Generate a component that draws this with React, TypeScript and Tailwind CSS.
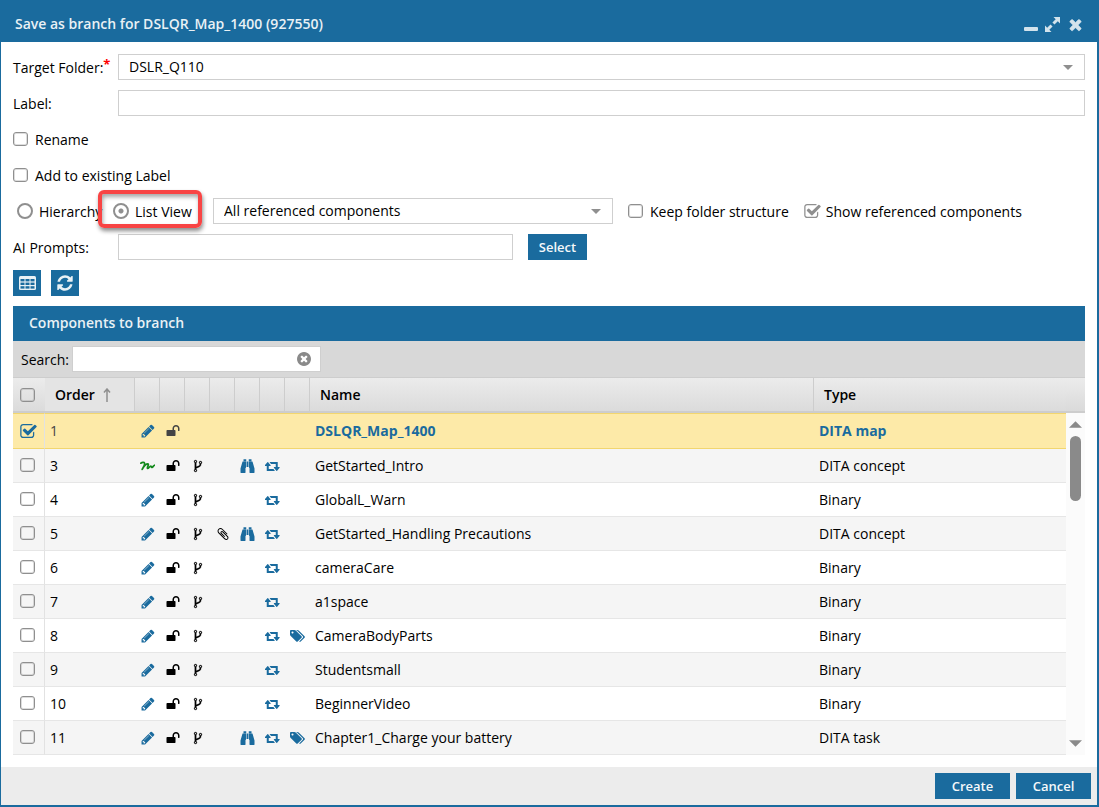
import React, { useState } from 'react';

const BLUE = '#1a6b9e';

const icons = {
  pencil: {
    box: '64 64 1664 1664',
    d: 'M491 1536l91-91-235-235-91 91v107h128v128h107zm523-928q0-22-22-22-10 0-17 7l-542 542q-7 7-7 17 0 22 22 22 10 0 17-7l542-542q7-7 7-17zm-54-192l416 416-832 832h-416v-416zm683 96q0 53-37 90l-166 166-416-416 166-165q36-38 90-38 53 0 91 38l235 234q37 39 37 91z',
  },
  unlock: {
    box: '0 0 1792 1792',
    d: 'M1728 576v256q0 26-19 45t-45 19h-64q-26 0-45-19t-19-45v-256q0-106-75-181t-181-75-181 75-75 181v192h96q40 0 68 28t28 68v576q0 40-28 68t-68 28h-960q-40 0-68-28t-28-68v-576q0-40 28-68t68-28h672v-192q0-185 131.5-316.5t316.5-131.5 316.5 131.5 131.5 316.5z',
  },
  fork: {
    box: '0 0 1792 1792',
    d: 'M672 1472q0-40-28-68t-68-28-68 28-28 68 28 68 68 28 68-28 28-68zm0-1152q0-40-28-68t-68-28-68 28-28 68 28 68 68 28 68-28 28-68zm640 128q0-40-28-68t-68-28-68 28-28 68 28 68 68 28 68-28 28-68zm96 0q0 52-26 96.5t-70 69.5q-2 287-226 414-67 38-203 81-128 40-169.5 71t-41.5 100v26q44 25 70 69.5t26 96.5q0 80-56 136t-136 56-136-56-56-136q0-52 26-96.5t70-69.5v-820q-44-25-70-69.5t-26-96.5q0-80 56-136t136-56 136 56 56 136q0 52-26 96.5t-70 69.5v497q54-26 154-57 55-17 87.5-29.5t70.5-31 59-39.5 40.5-51 28-69.5 8.5-91.5q-44-25-70-69.5t-26-96.5q0-80 56-136t136-56 136 56 56 136z',
  },
  clip: {
    box: '0 0 1792 1792',
    d: 'M1596 1385q0 117-79 196t-196 79q-135 0-235-100l-777-776q-113-115-113-271 0-159 110-270t269-111q158 0 273 113l605 606q10 10 10 22 0 16-30.5 46.5t-46.5 30.5q-13 0-23-10l-606-607q-79-77-181-77-106 0-179 75t-73 181q0 105 76 181l776 777q63 63 145 63 64 0 106-42t42-106q0-82-63-145l-581-581q-26-24-60-24-29 0-48 19t-19 48q0 32 25 59l410 410q10 10 10 22 0 16-31 47t-47 31q-12 0-22-10l-410-410q-63-61-63-149 0-82 57-139t139-57q88 0 149 63l581 581q100 98 100 235z',
  },
  binoculars: {
    box: '-64 0 1920 1792',
    d: 'M704 320v768q0 26-19 45t-45 19v576q0 26-19 45t-45 19h-512q-26 0-45-19t-19-45v-512l249-873q7-23 31-23h424zm320 0v704h-256v-704h256zm768 896v512q0 26-19 45t-45 19h-512q-26 0-45-19t-19-45v-576q-26 0-45-19t-19-45v-768h424q24 0 31 23zm-1056-1152v224h-352v-224q0-14 9-23t23-9h288q14 0 23 9t9 23zm672 0v224h-352v-224q0-14 9-23t23-9h288q14 0 23 9t9 23z',
  },
  retweet: {
    box: '-32 0 1920 1792',
    d: 'M1216 1504q0 13-9.5 22.5t-22.5 9.5h-960q-8 0-13.5-2t-9-7-5.5-8-3-11.5-1-11.5v-600h-192q-26 0-45-19t-19-45q0-24 15-41l320-384q19-22 49-22t49 22l320 384q15 17 15 41 0 26-19 45t-45 19h-192v384h576q16 0 25 11l160 192q7 10 7 21zm640-416q0 24-15 41l-320 384q-20 23-49 23t-49-23l-320-384q-15-17-15-41 0-26 19-45t45-19h192v-384h-576q-16 0-25-12l-160-192q-7-9-7-20 0-13 9.5-22.5t22.5-9.5h960q8 0 13.5 2t9 7 5.5 8 3 11.5 1 11.5v600h192q26 0 45 19t19 45z',
  },
  tags: {
    box: '0 0 1920 1792',
    d: 'M448 448q0-53-37.5-90.5t-90.5-37.5-90.5 37.5-37.5 90.5 37.5 90.5 90.5 37.5 90.5-37.5 37.5-90.5zm1067 576q0 53-37 90l-491 492q-39 37-91 37-53 0-90-37l-715-716q-38-37-64.5-101t-26.5-117v-416q0-52 38-90t90-38h416q53 0 117 26.5t102 64.5l715 714q37 39 37 91zm384 0q0 53-37 90l-491 492q-39 37-91 37-36 0-59-14t-53-45l470-470q37-37 37-90 0-52-37-91l-715-714q-38-38-102-64.5t-117-26.5h224q53 0 117 26.5t102 64.5l715 714q37 39 37 91z',
  },
  refresh: {
    box: '0 0 1792 1792',
    d: 'M1639 1056q0 5-1 7-64 268-268 434.5t-478 166.5q-146 0-282.5-55t-243.5-157l-129 129q-19 19-45 19t-45-19-19-45v-448q0-26 19-45t45-19h448q26 0 45 19t19 45-19 45l-137 137q71 66 161 102t187 36q134 0 250-65t186-179q11-17 53-117 8-23 30-23h192q13 0 22.5 9.5t9.5 22.5zm25-800v448q0 26-19 45t-45 19h-448q-26 0-45-19t-19-45 19-45l138-138q-148-137-349-137-134 0-250 65t-186 179q-11 17-53 117-8 23-30 23h-199q-13 0-22.5-9.5t-9.5-22.5v-7q65-268 270-434.5t480-166.5q146 0 284 55.5t245 156.5l130-129q19-19 45-19t45 19 19 45z',
  },
  times: {
    box: '0 0 1792 1792',
    d: 'M1490 1322q0 40-28 68l-136 136q-28 28-68 28t-68-28l-294-294-294 294q-28 28-68 28t-68-28l-136-136q-28-28-28-68t28-68l294-294-294-294q-28-28-28-68t28-68l136-136q28-28 68-28t68 28l294 294 294-294q28-28 68-28t68 28l136 136q28 28 28 68t-28 68l-294 294 294 294q28 28 28 68z',
  },
  timesCircle: {
    box: '128 128 1536 1536',
    d: 'M1277 1122q0-26-19-45l-181-181 181-181q19-19 19-45 0-27-19-46l-90-90q-19-19-46-19-26 0-45 19l-181 181-181-181q-19-19-45-19-27 0-46 19l-90 90q-19 19-19 46 0 26 19 45l181 181-181 181q-19 19-19 45 0 27 19 46l90 90q19 19 46 19 26 0 45-19l181-181 181 181q19 19 45 19 27 0 46-19l90-90q19-19 19-46zm387-226q0 209-103 385.5t-279.5 279.5-385.5 103-385.5-103-279.5-279.5-103-385.5 103-385.5 279.5-279.5 385.5-103 385.5 103 279.5 279.5 103 385.5z',
  },
  checkSquare: {
    box: '64 128 1664 1408',
    d: 'M1472 930v318q0 119-84.5 203.5t-203.5 84.5h-832q-119 0-203.5-84.5t-84.5-203.5v-832q0-119 84.5-203.5t203.5-84.5h832q63 0 117 25 15 7 18 23 3 17-9 29l-49 49q-10 10-23 10-3 0-9-2-23-6-45-6h-832q-66 0-113 47t-47 113v832q0 66 47 113t113 47h832q66 0 113-47t47-113v-254q0-13 9-22l64-64q10-10 23-10 6 0 12 3 20 8 20 29zm231-489l-814 814q-24 24-57 24t-57-24l-430-430q-24-24-24-57t24-57l110-110q24-24 57-24t57 24l263 263 647-647q24-24 57-24t57 24l110 110q24 24 24 57t-24 57z',
  },
};

type IconName = keyof typeof icons;

function Icon({ name, className = '' }: { name: IconName; className?: string }) {
  return (
    <svg viewBox={icons[name].box} fill="currentColor" aria-hidden="true" className={`shrink-0 ${className}`}>
      <path d={icons[name].d} />
    </svg>
  );
}

function Scribble() {
  return (
    <svg viewBox="0 0 15 14" fill="none" stroke="#138a1c" aria-hidden="true" className="h-[14px] w-[15px]">
      <path d="M.8 4.200C2 3.400 4.200 3 4.600 4.200 5 5.800 3.200 8.400 2.200 10.400 3.600 8 6.400 4.600 8.200 5 9.200 5.600 6.400 8.800 7.600 9.400 8.800 9.600 9.600 7 10.800 7 11.600 7.200 11 8.600 12 8.400 13 8.200 13.400 6.600 14.600 6.200" strokeWidth="1.7" strokeLinecap="round" strokeLinejoin="round" />
    </svg>
  );
}

function Arrow({ className = '' }: { className?: string }) {
  return (
    <svg viewBox="0 0 10 5" fill="currentColor" aria-hidden="true" className={className}>
      <path d="M0 0h10L5 5z" />
    </svg>
  );
}

type CheckProps = {
  id?: string;
  label?: string;
  checked: boolean;
  onChange: () => void;
  tone?: string;
};

function Check({ id, label, checked, onChange, tone = 'text-[#8f8f8f]' }: CheckProps) {
  return (
    <span className={`inline-grid h-[14px] w-[17px] items-center ${tone}`}>
      <input
        id={id}
        aria-label={label}
        type="checkbox"
        checked={checked}
        onChange={onChange}
        className="col-start-1 row-start-1 h-[14px] w-[15px] appearance-none rounded-[3px] border border-[#8f8f8f] bg-transparent shadow-[inset_0_0_0_1px_rgba(143,143,143,0.3)] checked:border-transparent checked:shadow-none"
      />
      {checked && <Icon name="checkSquare" className="pointer-events-none col-start-1 row-start-1 h-[14px] w-[17px]" />}
    </span>
  );
}

function SelectBox({ id, label, options, className = '' }: { id: string; label?: string; options: string[]; className?: string }) {
  return (
    <div className={`relative ${className}`}>
      <select id={id} aria-label={label} className="block h-[26px] w-full appearance-none border border-[#cfcfcf] bg-white pr-8 pb-px pl-[10px] text-black">
        {options.map((o) => (
          <option key={o}>{o}</option>
        ))}
      </select>
      <Arrow className="pointer-events-none absolute top-[11px] right-3 h-[5px] w-[10px] text-[#8f8f8f]" />
    </div>
  );
}

const inputClass = 'h-[26px] border border-[#cfcfcf] bg-white px-[10px]';
const blueButton = 'h-[26px] bg-[#1a6b9e] text-[13px] leading-[18px] font-semibold text-[#f4f8fa]';

type Row = {
  order: number;
  name: string;
  type: string;
  edited?: boolean;
  clip?: boolean;
  seen?: boolean;
  tags?: boolean;
};

const rows: Row[] = [
  { order: 1, name: 'DSLQR_Map_1400', type: 'DITA map' },
  { order: 3, name: 'GetStarted_Intro', type: 'DITA concept', edited: true, seen: true },
  { order: 4, name: 'GlobalL_Warn', type: 'Binary' },
  { order: 5, name: 'GetStarted_Handling Precautions', type: 'DITA concept', clip: true, seen: true },
  { order: 6, name: 'cameraCare', type: 'Binary' },
  { order: 7, name: 'a1space', type: 'Binary' },
  { order: 8, name: 'CameraBodyParts', type: 'Binary', tags: true },
  { order: 9, name: 'Studentsmall', type: 'Binary' },
  { order: 10, name: 'BeginnerVideo', type: 'Binary' },
  { order: 11, name: 'Chapter1_Charge your battery', type: 'DITA task', seen: true, tags: true },
];

function IconCell({ children, line }: { children?: React.ReactNode; line: string }) {
  return (
    <td className={`border-b p-0 ${line}`}>
      <span className="flex justify-center">{children}</span>
    </td>
  );
}

function ComponentRow({ row, odd, selected, onToggle }: { row: Row; odd: boolean; selected: boolean; onToggle: () => void }) {
  const root = row.order === 1;
  const line = selected ? 'border-[#f2d66f] border-t' : 'border-[#e6e6e6]';
  const bg = selected ? 'bg-[#fdeaa8] h-9' : odd ? 'bg-[#f5f5f5] h-[34px]' : 'bg-white h-[34px]';
  const small = 'h-[14px] w-[14px]';
  const wide = 'h-[14px] w-[15px] text-[#1a6b9e]';
  return (
    <tr className={bg}>
      <td className={`border-r border-b py-0 pr-0 pl-[7px] ${line} border-r-[#e2e2e2]`}>
        <span className="flex pb-px">
          <Check label={`Select ${row.name}`} checked={selected} onChange={onToggle} tone="text-[#1a6b9e]" />
        </span>
      </td>
      <td className={`border-b py-0 pr-0 pl-[5px] ${line} ${selected ? 'text-[#444]' : ''}`}>{row.order}</td>
      <IconCell line={line}>
        {row.edited ? <Scribble /> : <Icon name="pencil" className={`${small} text-[#1a6b9e]`} />}
      </IconCell>
      <IconCell line={line}>
        <Icon name="unlock" className={`${small} ${selected ? 'text-[#444]' : 'text-black'}`} />
      </IconCell>
      <IconCell line={line}>{!root && <Icon name="fork" className={`${small} stroke-current stroke-[30px]`} />}</IconCell>
      <IconCell line={line}>{row.clip && <Icon name="clip" className={small} />}</IconCell>
      <IconCell line={line}>{row.seen && <Icon name="binoculars" className={wide} />}</IconCell>
      <IconCell line={line}>{!root && <Icon name="retweet" className={wide} />}</IconCell>
      <IconCell line={line}>{row.tags && <Icon name="tags" className={wide} />}</IconCell>
      <td className={`border-b py-0 pr-2 pl-[5px] ${line} ${root ? 'font-bold text-[#1a6b9e]' : ''}`}>{row.name}</td>
      <td className={`border-b py-0 pr-2 pl-[5px] ${line} ${root ? 'font-bold text-[#1a6b9e]' : ''}`}>{row.type}</td>
    </tr>
  );
}

export default function App() {
  const [rename, setRename] = useState(false);
  const [addLabel, setAddLabel] = useState(false);
  const [view, setView] = useState('list');
  const [keep, setKeep] = useState(false);
  const [showRefs, setShowRefs] = useState(true);
  const [search, setSearch] = useState('');
  const [selected, setSelected] = useState<number[]>([1]);

  const toggle = (order: number) =>
    setSelected((prev) => (prev.includes(order) ? prev.filter((o) => o !== order) : [...prev, order]));

  const allSelected = selected.length === rows.length;
  const radioClass =
    'size-4 shrink-0 appearance-none rounded-full border-2 border-[#8f8f8f] bg-white bg-[radial-gradient(circle,#8f8f8f_2px,transparent_3px)]';
  const radioOff = 'size-4 shrink-0 appearance-none rounded-full border-2 border-[#8f8f8f] bg-white';

  return (
    <div className="flex min-h-screen flex-col border-r-2 border-b-2 border-l border-[#1a6b9e] bg-white font-['Open_Sans','Noto_Sans',sans-serif] text-[14px] leading-[20px] text-black">
      <header className="flex h-[42px] items-center justify-between bg-[#1a6b9e] pt-[6px] pr-[13px] pl-[14px] text-[#e9f1f5]">
        <h1 className="text-[14px] font-semibold">Save as branch for DSLQR_Map_1400 (927550)</h1>
        <div className="flex items-center gap-[7px] text-[#d3e3ec]">
          <button aria-label="Minimize" className="flex h-4 w-[14px] items-end pb-px">
            <span className="h-1 w-full rounded-[1px] bg-current" />
          </button>
          <button aria-label="Maximize">
            <svg viewBox="0 0 15 15" fill="currentColor" className="size-[15px]" aria-hidden="true">
              <path d="M8.500 0H15v6.500l-2.200-2.200-3.300 3.300-2.100-2.100 3.300-3.300zM6.500 15H0V8.500l2.200 2.200 3.300-3.300 2.100 2.100-3.300 3.300z" />
            </svg>
          </button>
          <button aria-label="Close">
            <Icon name="times" className="h-[17px] w-[17px] stroke-current stroke-[60px]" />
          </button>
        </div>
      </header>

      <main className="flex flex-1 flex-col gap-[10px] p-3">
        <div className="flex items-center">
          <label htmlFor="target" className="w-[105px] shrink-0 pt-[2px]">
            Target Folder:<sup className="relative -top-1 align-baseline text-[13px] leading-none font-bold text-[#ff0000]">*</sup>
          </label>
          <SelectBox id="target" options={['DSLR_Q110']} className="flex-1" />
        </div>

        <div className="flex items-center">
          <label htmlFor="label" className="w-[105px] shrink-0 pt-[2px]">Label:</label>
          <input id="label" type="text" className={`min-w-0 flex-1 ${inputClass}`} />
        </div>

        <div className="flex h-[26px] items-center gap-[5px]">
          <Check id="rename" checked={rename} onChange={() => setRename(!rename)} />
          <label htmlFor="rename" className="pt-[2px]">Rename</label>
        </div>

        <div className="flex h-[26px] items-center gap-[5px]">
          <Check id="add-label" checked={addLabel} onChange={() => setAddLabel(!addLabel)} />
          <label htmlFor="add-label" className="pt-[2px]">Add to existing Label</label>
        </div>

        <div className="flex h-[26px] items-center">
          <div className="flex w-[96px] shrink-0 items-center gap-[6px] pl-1 whitespace-nowrap">
            <input id="hierarchy" type="radio" name="view" checked={view === 'hierarchy'} onChange={() => setView('hierarchy')} className={view === 'hierarchy' ? radioClass : radioOff} />
            <label htmlFor="hierarchy" className="pt-[2px]">Hierarchy</label>
          </div>
          <div className="relative flex w-[104px] shrink-0 items-center gap-[6px] pl-1 whitespace-nowrap">
            <input id="list" type="radio" name="view" checked={view === 'list'} onChange={() => setView('list')} className={view === 'list' ? radioClass : radioOff} />
            <label htmlFor="list" className="pt-[2px]">List View</label>
            <div className="pointer-events-none absolute -top-[10px] -left-[11px] h-[38px] w-[104px] rounded-md border-4 border-[#f84444] shadow-[1px_3px_4px_rgba(0,0,0,0.45),inset_1px_3px_4px_rgba(0,0,0,0.35)]" />
          </div>
          <SelectBox id="scope" label="Components shown" options={['All referenced components']} className="w-[400px]" />
          <div className="ml-[15px] flex items-center gap-[5px] whitespace-nowrap">
            <Check id="keep" checked={keep} onChange={() => setKeep(!keep)} />
            <label htmlFor="keep" className="pt-[2px]">Keep folder structure</label>
          </div>
          <div className="ml-[15px] flex items-center gap-[5px] whitespace-nowrap">
            <Check id="refs" checked={showRefs} onChange={() => setShowRefs(!showRefs)} />
            <label htmlFor="refs" className="pt-[2px]">Show referenced components</label>
          </div>
        </div>

        <div className="flex items-center">
          <label htmlFor="prompts" className="w-[105px] shrink-0 pt-[2px]">AI Prompts:</label>
          <input id="prompts" type="text" className={`w-[395px] ${inputClass}`} />
          <button className={`ml-[15px] w-[59px] ${blueButton}`}>Select</button>
        </div>

        <div className="flex gap-[10px]">
          <button aria-label="Columns" className="flex h-[26px] w-7 items-center justify-center bg-[#1a6b9e] pl-px">
            <svg viewBox="0 0 17 14" className="h-[14px] w-[17px]" aria-hidden="true">
              <rect width="17" height="14" rx="1.500" fill="#e9f1f5" />
              {[1.5, 6.5, 11.5].map((x) =>
                [3, 6.6, 10.2].map((y) => <rect key={`${x}-${y}`} x={x} y={y} width="4" height="2.400" fill={BLUE} />)
              )}
            </svg>
          </button>
          <button aria-label="Refresh" className="flex h-[26px] w-7 items-center justify-center bg-[#1a6b9e] text-[#e9f1f5]">
            <Icon name="refresh" className="size-[18px]" />
          </button>
        </div>

        <section>
          <h2 className="flex h-[35px] items-center bg-[#1a6b9e] pb-[2px] pl-4 text-[14px] font-semibold text-[#e9f1f5]">Components to branch</h2>
          <div className="flex h-[36px] items-center bg-[#d8d8d8] pl-2">
            <label htmlFor="search" className="w-[51px] pt-[2px]">Search:</label>
            <div className="flex h-[26px] w-[249px] items-center border border-[#cfcfcf] bg-white pr-[9px]">
              <input id="search" type="text" value={search} onChange={(e) => setSearch(e.target.value)} className="min-w-0 flex-1 px-2 outline-none" />
              <button aria-label="Clear search" onClick={() => setSearch('')} className="text-[#8a8a8a]">
                <Icon name="timesCircle" className="size-[14px]" />
              </button>
            </div>
          </div>

          <div className="flex">
            <table className="flex-1 table-fixed border-separate border-spacing-0 text-left">
              <colgroup>
                <col className="w-8" />
                <col className="w-[90px]" />
                {[0, 1, 2, 3, 4, 5, 6].map((i) => (
                  <col key={i} className="w-[25px]" />
                ))}
                <col className="w-[504px]" />
                <col />
              </colgroup>
              <thead>
                <tr className="h-9 bg-linear-to-b from-[#ececec] to-[#dadada]">
                  <th className="border-t border-b-2 border-[#cdcdcd] py-0 pr-0 pl-[7px]">
                    <span className="flex">
                      <Check label="Select all" checked={allSelected} onChange={() => setSelected(allSelected ? [] : rows.map((r) => r.order))} />
                    </span>
                  </th>
                  <th className="border-t border-r border-b-2 border-[#cdcdcd] bg-[#e4e4e4] py-0 pr-0 pl-[10px] font-semibold">
                    <span className="flex items-center gap-2">
                      Order
                      <svg viewBox="0 0 8 14" fill="none" stroke="#8f8f8f" strokeWidth="1.500" className="h-[14px] w-2" aria-hidden="true">
                        <path d="M4 14V1M1 4.500L4 1l3 3.500" />
                      </svg>
                    </span>
                  </th>
                  {[0, 1, 2, 3, 4, 5, 6].map((i) => (
                    <th key={i} className="border-t border-r border-b-2 border-[#cdcdcd] p-0" />
                  ))}
                  <th className="border-t border-r border-b-2 border-[#cdcdcd] py-0 pr-0 pl-[10px] font-semibold">Name</th>
                  <th className="border-t border-b-2 border-[#cdcdcd] py-0 pr-0 pl-[10px] font-semibold">Type</th>
                </tr>
              </thead>
              <tbody>
                {rows.map((row, i) => (
                  <ComponentRow key={row.order} row={row} odd={i % 2 === 1} selected={selected.includes(row.order)} onToggle={() => toggle(row.order)} />
                ))}
              </tbody>
            </table>

            <div className="flex w-[19px] shrink-0 flex-col items-center bg-[#fbfbfb]">
              <div className="h-9 w-full border-t border-b-2 border-[#cdcdcd] bg-linear-to-b from-[#ececec] to-[#dadada]" />
              <Arrow className="mt-2 h-[7px] w-[13px] rotate-180 text-[#8a8a8a]" />
              <div className="mt-2 h-[65px] w-[11px] rounded-full bg-[#8a8a8a]" />
              <Arrow className="mt-auto mb-2 h-[7px] w-[13px] text-[#8a8a8a]" />
            </div>
          </div>
        </section>
      </main>

      <footer className="flex justify-end gap-[6px] bg-[#ececec] p-[6px]">
        <button className={`w-[75px] ${blueButton}`}>Create</button>
        <button className={`w-[75px] ${blueButton}`}>Cancel</button>
      </footer>
    </div>
  );
}
